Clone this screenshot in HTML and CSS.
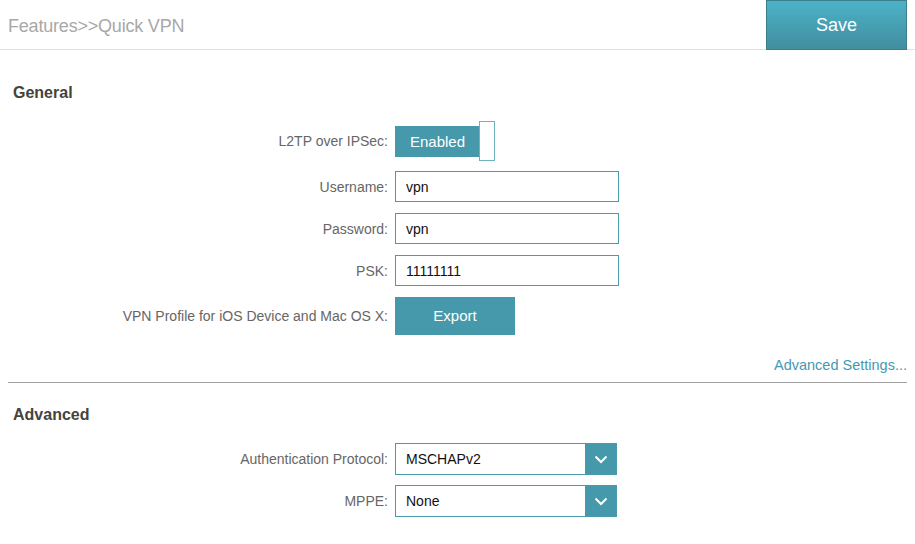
FILE: index.html
```html
<!DOCTYPE html>
<html lang="en">
<head>
  <meta charset="UTF-8">
  <meta name="viewport" content="width=device-width, initial-scale=1.0">
  <title>Quick VPN</title>
  <link rel="stylesheet" href="styles.css">
</head>
<body>
  <div class="header">
    <div class="crumb">Features&gt;&gt;Quick VPN</div>
    <button class="save">Save</button>
  </div>

  <div class="section">
    <h2 class="title">General</h2>

    <div class="row row-toggle">
      <label class="label">L2TP over IPSec:</label>
      <div class="toggle">
        <span class="toggle-on">Enabled</span>
        <span class="toggle-knob"></span>
      </div>
    </div>

    <div class="row row-first">
      <label class="label">Username:</label>
      <input class="field" type="text" value="vpn">
    </div>

    <div class="row">
      <label class="label">Password:</label>
      <input class="field" type="text" value="vpn">
    </div>

    <div class="row">
      <label class="label">PSK:</label>
      <input class="field" type="text" value="11111111">
    </div>

    <div class="row">
      <label class="label">VPN Profile for iOS Device and Mac OS X:</label>
      <button class="export">Export</button>
    </div>

    <div class="more"><a href="#">Advanced Settings...</a></div>
  </div>

  <hr class="divider">

  <div class="section">
    <h2 class="title title-adv">Advanced</h2>

    <div class="row row-select">
      <label class="label">Authentication Protocol:</label>
      <div class="select">
        <span class="select-value">MSCHAPv2</span>
        <span class="select-arrow">
          <svg width="14" height="9" viewBox="0 0 14 9"><path d="M1.5 1.5 L7 7 L12.5 1.5" fill="none" stroke="#fff" stroke-width="2"/></svg>
        </span>
      </div>
    </div>

    <div class="row row-first">
      <label class="label">MPPE:</label>
      <div class="select">
        <span class="select-value">None</span>
        <span class="select-arrow">
          <svg width="14" height="9" viewBox="0 0 14 9"><path d="M1.5 1.5 L7 7 L12.5 1.5" fill="none" stroke="#fff" stroke-width="2"/></svg>
        </span>
      </div>
    </div>
  </div>
</body>
</html>
```

FILE: styles.css
```css
body {
  font-family: "Liberation Sans", Arial, sans-serif;
  background: #fff;
  color: #333;
  margin: 0;
}
.header {
  display: flex;
  justify-content: space-between;
  align-items: center;
  height: 49px;
  padding-left: 8px;
  border-bottom: 1px solid #e0e0e0;
}
.crumb {
  font-size: 18px;
  color: #a8a8a8;
  letter-spacing: -0.2px;
  margin-top: 3px;
}
.save {
  align-self: flex-start;
  width: 141px;
  height: 50px;
  margin-right: 8px;
  border: 1px solid #3d7d8b;
  background: linear-gradient(#4cb2c8, #418e9e);
  color: #fff;
  font-family: inherit;
  font-size: 18px;
  padding-top: 2px;
  cursor: pointer;
}
.section {
  padding: 0 8px;
}
.title {
  margin: 33px 0 0 5px;
  font-size: 16px;
  line-height: 20px;
  font-weight: bold;
  color: #45443a;
}
.title-adv {
  margin-top: 22px;
}
.row {
  display: flex;
  align-items: center;
  margin-top: 11px;
}
.row-toggle {
  margin-top: 18px;
}
.row-first {
  margin-top: 10px;
}
.row-select {
  margin-top: 18px;
}
.label {
  width: 380px;
  padding-right: 7px;
  text-align: right;
  font-size: 14px;
  color: #666;
}
.toggle {
  display: flex;
  align-items: center;
  height: 40px;
}
.toggle-on {
  width: 85px;
  height: 31px;
  line-height: 31px;
  background: #4698ab;
  color: #fff;
  font-size: 15px;
  text-align: center;
}
.toggle-knob {
  width: 14px;
  height: 38px;
  margin-left: -1px;
  border: 1px solid #6fb3c2;
  background: #fff;
}
.field {
  box-sizing: border-box;
  width: 224px;
  height: 31px;
  margin: 0;
  padding: 0 10px;
  border: 1px solid #4a9aab;
  border-radius: 0;
  font-family: inherit;
  font-size: 14px;
  color: #111;
  outline: none;
}
.export {
  width: 120px;
  height: 38px;
  border: none;
  background: #4698ab;
  color: #fff;
  font-family: inherit;
  font-size: 15px;
  padding-bottom: 2px;
  cursor: pointer;
}
.more {
  margin-top: 21px;
  text-align: right;
  font-size: 14.5px;
  line-height: 18px;
}
.more a {
  color: #4599b3;
  text-decoration: none;
}
.divider {
  margin: 8px 8px 0;
  border: none;
  border-top: 1px solid #a0a0a0;
  height: 0;
}
.select {
  box-sizing: border-box;
  display: flex;
  align-items: center;
  width: 222px;
  height: 32px;
  border: 1px solid #4a9aab;
}
.select-value {
  flex: 1;
  padding-left: 10px;
  font-size: 14px;
  color: #111;
}
.select-arrow {
  display: flex;
  align-items: center;
  justify-content: center;
  width: 31px;
  height: 100%;
  background: #4698ab;
}
```
